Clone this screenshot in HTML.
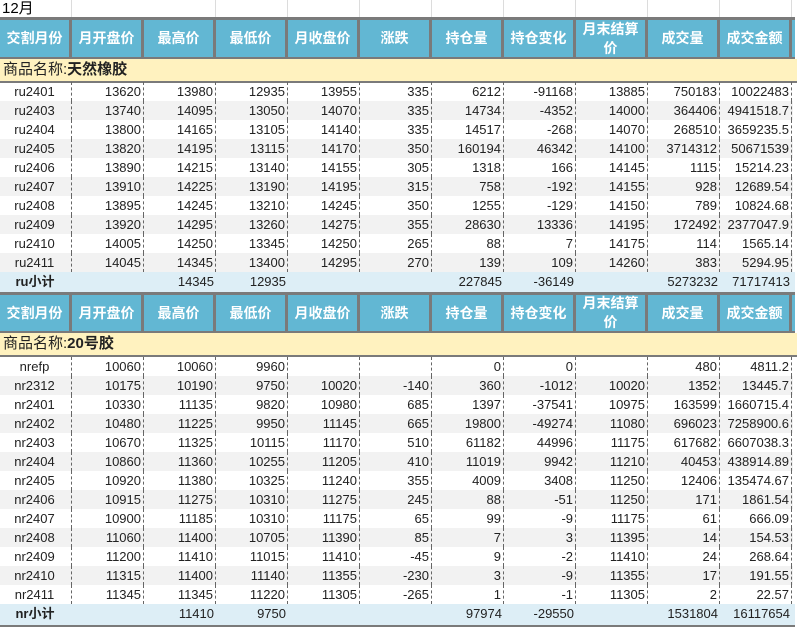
<!DOCTYPE html>
<html><head><meta charset="utf-8"><style>
body{margin:0;width:797px;height:629px;overflow:hidden;background:#fff;font-family:"Liberation Sans","Noto Sans CJK SC",sans-serif;position:relative}
.top{position:absolute;left:0;top:0;height:18px;width:797px;}
.top div{position:absolute;top:0;height:18px;border-right:1px solid #dcdcdc;width:71px}
.t12{position:absolute;left:2px;top:0;font-size:15px;line-height:18px}
.hd{position:absolute;left:0;width:795px;background:#62b7d3;border-top:3px solid #7a7a7a;border-bottom:3px solid #7a7a7a;box-sizing:border-box;display:flex}
.hd div{width:72px;flex:none;box-sizing:border-box;border-right:3px solid #7a7a7a;color:#fff;font-weight:bold;font-size:14px;display:flex;align-items:center;justify-content:center;text-align:center;line-height:19px}
.nm{position:absolute;left:0;width:797px;height:24px;background:#fff2bf;border-bottom:2px solid #7a7a7a;box-sizing:border-box;font-size:15px;line-height:22px;padding-left:3px;color:#222}
.nm b{font-weight:bold}
.r{position:absolute;left:0;width:793px;height:19px;display:flex;font-size:13px;color:#222}
.r.g{background:#f2f2f2}
.r div{width:72px;flex:none;box-sizing:border-box;text-align:right;padding-right:2px;line-height:19px;border-right:1px dashed #666;height:19px}
.r div:first-child{text-align:center}
.r.s{background:#ddeef6;border-bottom:2px solid #7a7a7a;height:21px;width:795px}
.r.s div{border-right:none}
.r.s div:first-child{font-weight:bold}
</style></head><body>
<div class="top"><div style="left:0"></div><div style="left:144px"></div><div style="left:216px"></div><div style="left:288px"></div><div style="left:360px"></div><div style="left:432px"></div><div style="left:504px"></div><div style="left:576px"></div><div style="left:648px"></div><div style="left:720px"></div></div>
<div class="t12">12月</div>

<div class="hd" style="top:17px;height:43px"><div>交割月份</div><div>月开盘价</div><div>最高价</div><div>最低价</div><div>月收盘价</div><div>涨跌</div><div>持仓量</div><div>持仓变化</div><div>月末结算<br>价</div><div>成交量</div><div>成交金额</div></div>
<div class="nm" style="top:59px">商品名称:<b>天然橡胶</b></div>

<div class="r" style="top:82px"><div>ru2401</div><div>13620</div><div>13980</div><div>12935</div><div>13955</div><div>335</div><div>6212</div><div>-91168</div><div>13885</div><div>750183</div><div>10022483</div></div>
<div class="r g" style="top:101px"><div>ru2403</div><div>13740</div><div>14095</div><div>13050</div><div>14070</div><div>335</div><div>14734</div><div>-4352</div><div>14000</div><div>364406</div><div>4941518.7</div></div>
<div class="r" style="top:120px"><div>ru2404</div><div>13800</div><div>14165</div><div>13105</div><div>14140</div><div>335</div><div>14517</div><div>-268</div><div>14070</div><div>268510</div><div>3659235.5</div></div>
<div class="r g" style="top:139px"><div>ru2405</div><div>13820</div><div>14195</div><div>13115</div><div>14170</div><div>350</div><div>160194</div><div>46342</div><div>14100</div><div>3714312</div><div>50671539</div></div>
<div class="r" style="top:158px"><div>ru2406</div><div>13890</div><div>14215</div><div>13140</div><div>14155</div><div>305</div><div>1318</div><div>166</div><div>14145</div><div>1115</div><div>15214.23</div></div>
<div class="r g" style="top:177px"><div>ru2407</div><div>13910</div><div>14225</div><div>13190</div><div>14195</div><div>315</div><div>758</div><div>-192</div><div>14155</div><div>928</div><div>12689.54</div></div>
<div class="r" style="top:196px"><div>ru2408</div><div>13895</div><div>14245</div><div>13210</div><div>14245</div><div>350</div><div>1255</div><div>-129</div><div>14150</div><div>789</div><div>10824.68</div></div>
<div class="r g" style="top:215px"><div>ru2409</div><div>13920</div><div>14295</div><div>13260</div><div>14275</div><div>355</div><div>28630</div><div>13336</div><div>14195</div><div>172492</div><div>2377047.9</div></div>
<div class="r" style="top:234px"><div>ru2410</div><div>14005</div><div>14250</div><div>13345</div><div>14250</div><div>265</div><div>88</div><div>7</div><div>14175</div><div>114</div><div>1565.14</div></div>
<div class="r g" style="top:253px"><div>ru2411</div><div>14045</div><div>14345</div><div>13400</div><div>14295</div><div>270</div><div>139</div><div>109</div><div>14260</div><div>383</div><div>5294.95</div></div>
<div class="r s" style="top:272px"><div>ru小计</div><div></div><div>14345</div><div>12935</div><div></div><div></div><div>227845</div><div>-36149</div><div></div><div>5273232</div><div>71717413</div></div>

<div class="hd" style="top:292px;height:42px"><div>交割月份</div><div>月开盘价</div><div>最高价</div><div>最低价</div><div>月收盘价</div><div>涨跌</div><div>持仓量</div><div>持仓变化</div><div>月末结算<br>价</div><div>成交量</div><div>成交金额</div></div>
<div class="nm" style="top:333px">商品名称:<b>20号胶</b></div>

<div class="r" style="top:357px"><div>nrefp</div><div>10060</div><div>10060</div><div>9960</div><div></div><div></div><div>0</div><div>0</div><div></div><div>480</div><div>4811.2</div></div>
<div class="r g" style="top:376px"><div>nr2312</div><div>10175</div><div>10190</div><div>9750</div><div>10020</div><div>-140</div><div>360</div><div>-1012</div><div>10020</div><div>1352</div><div>13445.7</div></div>
<div class="r" style="top:395px"><div>nr2401</div><div>10330</div><div>11135</div><div>9820</div><div>10980</div><div>685</div><div>1397</div><div>-37541</div><div>10975</div><div>163599</div><div>1660715.4</div></div>
<div class="r g" style="top:414px"><div>nr2402</div><div>10480</div><div>11225</div><div>9950</div><div>11145</div><div>665</div><div>19800</div><div>-49274</div><div>11080</div><div>696023</div><div>7258900.6</div></div>
<div class="r" style="top:433px"><div>nr2403</div><div>10670</div><div>11325</div><div>10115</div><div>11170</div><div>510</div><div>61182</div><div>44996</div><div>11175</div><div>617682</div><div>6607038.3</div></div>
<div class="r g" style="top:452px"><div>nr2404</div><div>10860</div><div>11360</div><div>10255</div><div>11205</div><div>410</div><div>11019</div><div>9942</div><div>11210</div><div>40453</div><div>438914.89</div></div>
<div class="r" style="top:471px"><div>nr2405</div><div>10920</div><div>11380</div><div>10325</div><div>11240</div><div>355</div><div>4009</div><div>3408</div><div>11250</div><div>12406</div><div>135474.67</div></div>
<div class="r g" style="top:490px"><div>nr2406</div><div>10915</div><div>11275</div><div>10310</div><div>11275</div><div>245</div><div>88</div><div>-51</div><div>11250</div><div>171</div><div>1861.54</div></div>
<div class="r" style="top:509px"><div>nr2407</div><div>10900</div><div>11185</div><div>10310</div><div>11175</div><div>65</div><div>99</div><div>-9</div><div>11175</div><div>61</div><div>666.09</div></div>
<div class="r g" style="top:528px"><div>nr2408</div><div>11060</div><div>11400</div><div>10705</div><div>11390</div><div>85</div><div>7</div><div>3</div><div>11395</div><div>14</div><div>154.53</div></div>
<div class="r" style="top:547px"><div>nr2409</div><div>11200</div><div>11410</div><div>11015</div><div>11410</div><div>-45</div><div>9</div><div>-2</div><div>11410</div><div>24</div><div>268.64</div></div>
<div class="r g" style="top:566px"><div>nr2410</div><div>11315</div><div>11400</div><div>11140</div><div>11355</div><div>-230</div><div>3</div><div>-9</div><div>11355</div><div>17</div><div>191.55</div></div>
<div class="r" style="top:585px"><div>nr2411</div><div>11345</div><div>11345</div><div>11220</div><div>11305</div><div>-265</div><div>1</div><div>-1</div><div>11305</div><div>2</div><div>22.57</div></div>
<div class="r s" style="top:604px"><div>nr小计</div><div></div><div>11410</div><div>9750</div><div></div><div></div><div>97974</div><div>-29550</div><div></div><div>1531804</div><div>16117654</div></div>
</body></html>
